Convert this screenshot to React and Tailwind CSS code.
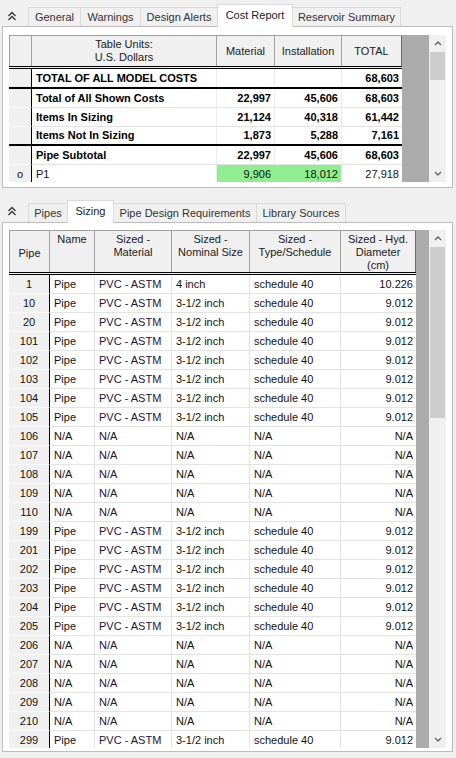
import React from "react";

const FONT = "font-['Liberation_Sans',Arial,sans-serif]";

function Chevrons() {
	return (
		<svg width="10" height="10" viewBox="0 0 10 10" fill="none" stroke="#333" strokeWidth="1.3">
			<path d="M1.5 5 L5 1.5 L8.5 5" />
			<path d="M1.5 9 L5 5.5 L8.5 9" />
		</svg>
	);
}

function Arrow({ down }) {
	return (
		<svg width="8" height="5" viewBox="0 0 8 5" fill="none" stroke="#606060" strokeWidth="1.3">
			{down ? <path d="M1 1 L4 4 L7 1" /> : <path d="M1 4 L4 1 L7 4" />}
		</svg>
	);
}

function ScrollBar({ thumb }) {
	return (
		<div className="w-[17px] h-full flex flex-col bg-[#f0f0f0]">
			<div className="h-[17px] flex items-center justify-center">
				<Arrow />
			</div>
			<div className="flex-1">
				<div className={"mx-[1px] bg-[#cdcdcd] " + thumb} />
			</div>
			<div className="h-[17px] flex items-center justify-center">
				<Arrow down />
			</div>
		</div>
	);
}

function Tab({ label, w, active }) {
	if (active) {
		return (
			<div
				className={
					"relative z-10 -ml-px -mb-px h-[23px] bg-white border border-b-0 border-[#d9d9d9] flex items-center justify-center pb-[2px] text-[#222] " +
					w
				}
			>
				{label}
			</div>
		);
	}
	return (
		<div
			className={
				"-ml-px h-[19px] bg-[#f0f0f0] border border-b-0 border-[#d9d9d9] flex items-center justify-center text-[#333] " +
				w
			}
		>
			{label}
		</div>
	);
}

const topRows = [
	{ label: "TOTAL OF ALL MODEL COSTS", m: "", i: "", t: "68,603", bold: true, thick: true, h: "h-[20px]" },
	{ label: "Total of All Shown Costs", m: "22,997", i: "45,606", t: "68,603", bold: true },
	{ label: "Items In Sizing", m: "21,124", i: "40,318", t: "61,442", bold: true },
	{ label: "Items Not In Sizing", m: "1,873", i: "5,288", t: "7,161", bold: true, thick: true, h: "h-[19px]" },
	{ label: "Pipe Subtotal", m: "22,997", i: "45,606", t: "68,603", bold: true },
	{ label: "P1", m: "9,906", i: "18,012", t: "27,918", marker: "o", green: true },
];

const sized = ["Pipe", "PVC - ASTM", "3-1/2 inch", "schedule 40", "9.012"];
const na = ["N/A", "N/A", "N/A", "N/A", "N/A"];
const pipeRows = [
	["1", "Pipe", "PVC - ASTM", "4 inch", "schedule 40", "10.226"],
	...["10", "20", "101", "102", "103", "104", "105"].map((p) => [p, ...sized]),
	...["106", "107", "108", "109", "110"].map((p) => [p, ...na]),
	...["199", "201", "202", "203", "204", "205"].map((p) => [p, ...sized]),
	...["206", "207", "208", "209", "210"].map((p) => [p, ...na]),
	["299", ...sized],
];

function TopGrid() {
	return (
		<div className="flex h-[147px]">
			<div className="w-[393px] h-full overflow-hidden bg-white">
				{/* header */}
				<div className="flex h-[34px] border-t border-[#a0a0a0] border-b-[3px] border-double border-b-black bg-[#f0f0f0] text-[#1a1a1a]">
					<div className="w-[23px] border-l border-r border-[#a0a0a0]" />
					<div className="w-[185px] border-r border-[#a0a0a0] flex flex-col items-center justify-center leading-[13px]">
						<span>Table Units:</span>
						<span>U.S. Dollars</span>
					</div>
					<div className="w-[58px] border-r border-[#a0a0a0] flex items-center justify-center">Material</div>
					<div className="w-[67px] border-r border-[#a0a0a0] flex items-center justify-center">Installation</div>
					<div className="w-[60px] border-r border-[#696969] flex items-center justify-center">TOTAL</div>
				</div>
				{topRows.map((r) => (
					<div
						key={r.label}
						className={
							"flex " +
							(r.thick ? r.h + " border-b-2 border-black " : "h-[19px] ") +
							(r.bold ? "font-bold text-black" : "text-[#111]")
						}
					>
						<div
							className={
								"w-[23px] bg-[#f0f0f0] border-r border-black flex items-center justify-center " +
								(r.thick ? "" : "border-b border-b-[#fbfbfb]")
							}
						>
							{r.marker}
						</div>
						<div
							className={
								"w-[185px] pl-[4px] flex items-center border-r border-[#ececec] " +
								(r.thick ? "" : "border-b border-b-[#e3e3e3]")
							}
						>
							{r.label}
						</div>
						<div
							className={
								"w-[58px] pr-[3px] flex items-center justify-end border-r " +
								(r.green ? "bg-[#90ee90] border-[#90ee90] " : "border-[#ececec] ") +
								(r.thick ? "" : "border-b border-b-[#e3e3e3]")
							}
						>
							{r.m}
						</div>
						<div
							className={
								"w-[67px] pr-[3px] flex items-center justify-end border-r " +
								(r.green ? "bg-[#90ee90] border-[#ececec] " : "border-[#ececec] ") +
								(r.thick ? "" : "border-b border-b-[#e3e3e3]")
							}
						>
							{r.i}
						</div>
						<div
							className={
								"w-[60px] pr-[3px] flex items-center justify-end " +
								(r.thick ? "" : "border-b border-b-[#e3e3e3]")
							}
						>
							{r.t}
						</div>
					</div>
				))}
			</div>
			<div className="w-[27px] h-full bg-[#ababab]" />
			<ScrollBar thumb="h-[28px]" />
		</div>
	);
}

function BottomGrid() {
	const widths = ["w-[45px]", "w-[77px]", "w-[78px]", "w-[91px]", "w-[75px]"];
	return (
		<div className="flex h-[518px]">
			<div className="w-[407px] h-full overflow-hidden bg-white">
				<div className="flex h-[45px] border-t border-[#a0a0a0] border-b-[3px] border-double border-b-black bg-[#f0f0f0] text-[#1a1a1a] leading-[13px] text-center">
					<div className="w-[41px] border-l border-r border-[#a0a0a0] flex items-center justify-center pt-[4px]">
						Pipe
					</div>
					<div className="w-[45px] border-r border-[#a0a0a0] pt-[2px]">Name</div>
					<div className="w-[77px] border-r border-[#a0a0a0] pt-[2px]">
						Sized -<br />
						Material
					</div>
					<div className="w-[78px] border-r border-[#a0a0a0] pt-[2px]">
						Sized -<br />
						Nominal Size
					</div>
					<div className="w-[91px] border-r border-[#a0a0a0] pt-[2px]">
						Sized -<br />
						Type/Schedule
					</div>
					<div className="w-[75px] border-r border-[#696969] pt-[2px]">
						Sized - Hyd.
						<br />
						Diameter
						<br />
						(cm)
					</div>
				</div>
				{pipeRows.map((r) => (
					<div key={r[0]} className="flex h-[19px] text-[#111]">
						<div className="w-[41px] bg-[#f0f0f0] border-r border-black border-b border-b-[#fbfbfb] flex items-center justify-center">
							{r[0]}
						</div>
						{r.slice(1).map((c, i) => (
							<div
								key={i}
								className={
									widths[i] +
									" flex items-center border-b border-[#e3e3e3] " +
									(i === 4 ? "justify-end pr-[3px]" : "pl-[4px] border-r") +
									(i === 1 ? " text-[#24123c]" : "")
								}
							>
								{c}
							</div>
						))}
					</div>
				))}
			</div>
			<div className="w-[13px] h-full bg-[#ababab]" />
			<ScrollBar thumb="h-[171px]" />
		</div>
	);
}

export default function App() {
	return (
		<div className={"w-[456px] h-[758px] overflow-hidden bg-[#f0f0f0] text-[11px] " + FONT}>
			{/* top tabs */}
			<div className="flex items-end h-[26px]">
				<div className="w-[29px] h-[19px] flex items-center pl-[7px] mb-[1px]">
					<Chevrons />
				</div>
				<Tab label="General" w="w-[53px]" />
				<Tab label="Warnings" w="w-[61px]" />
				<Tab label="Design Alerts" w="w-[78px]" />
				<Tab label="Cost Report" w="w-[76px]" active />
				<Tab label="Reservoir Summary" w="w-[109px]" />
			</div>
			<div className="ml-[2px] w-[451px] h-[162px] border border-[#bcbcbc] bg-white pt-[8px] pl-[6px]">
				<TopGrid />
			</div>

			{/* bottom tabs */}
			<div className="flex items-end h-[34px]">
				<div className="w-[29px] h-[19px] flex items-center pl-[7px] pb-[4px]">
					<Chevrons />
				</div>
				<Tab label="Pipes" w="w-[40px]" />
				<Tab label="Sizing" w="w-[47px]" active />
				<Tab label="Pipe Design Requirements" w="w-[144px]" />
				<Tab label="Library Sources" w="w-[90px]" />
			</div>
			<div className="ml-[2px] w-[451px] h-[530px] border border-[#bcbcbc] bg-white pt-[7px] pl-[6px]">
				<BottomGrid />
			</div>
		</div>
	);
}
